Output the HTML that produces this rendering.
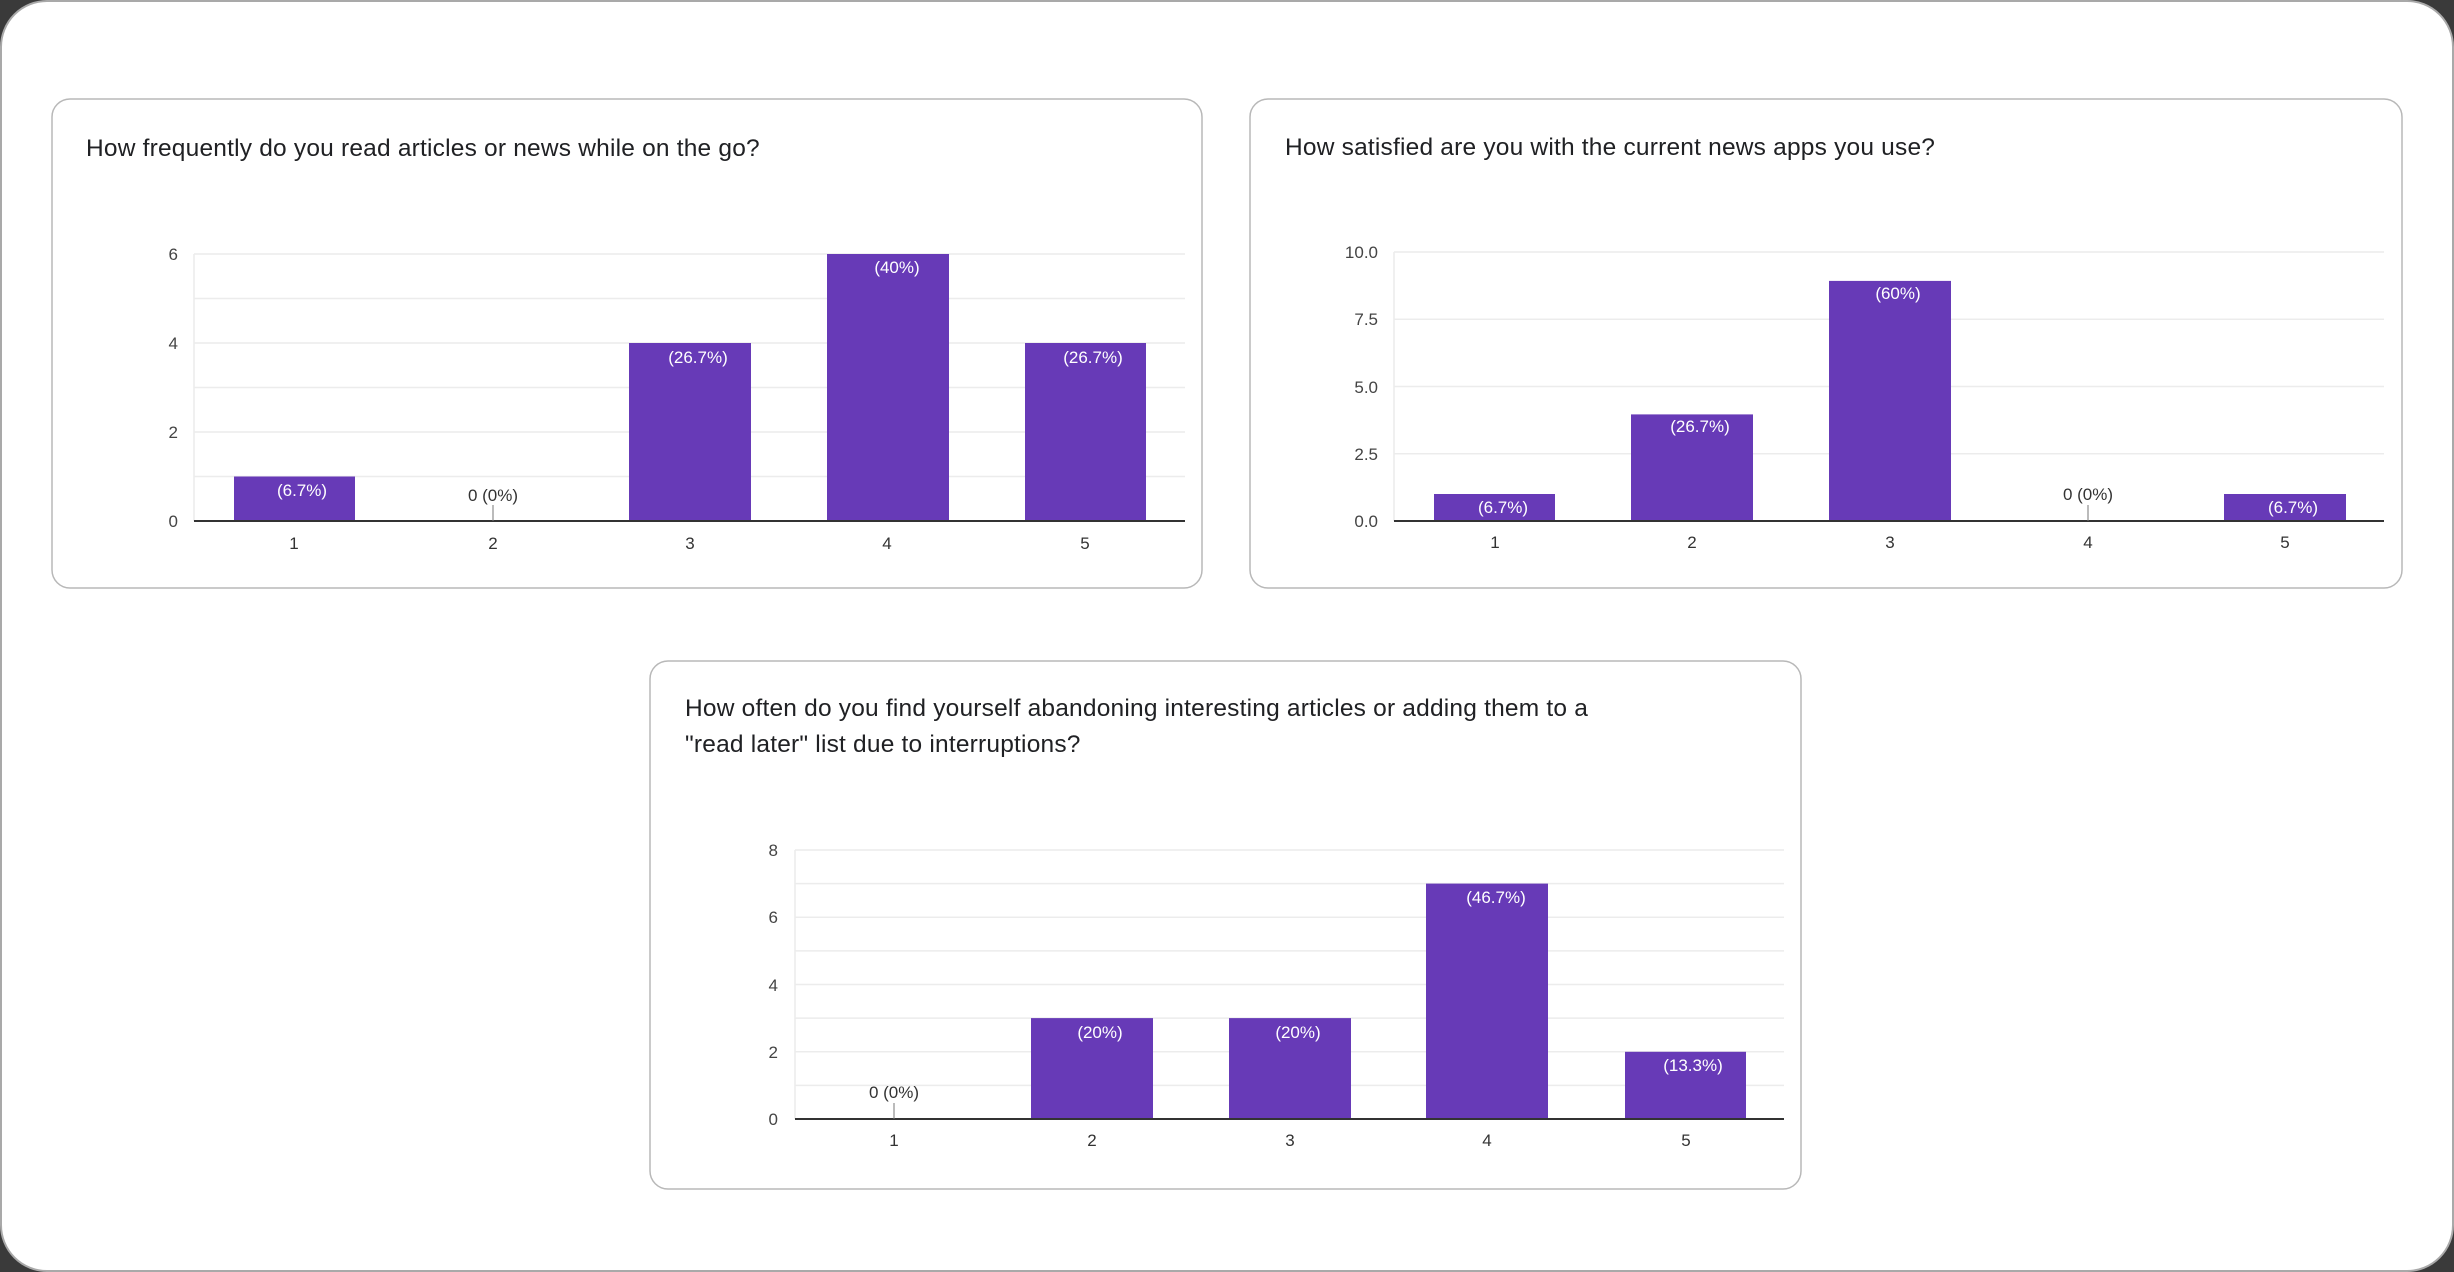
<!DOCTYPE html>
<html><head><meta charset="utf-8"><style>
html,body{margin:0;padding:0;background:#fff;}
svg{display:block;font-family:"Liberation Sans",Arial,sans-serif;}
.t{font-size:24.5px;letter-spacing:0.2px;}
</style></head><body>
<svg width="2454" height="1272" viewBox="0 0 2454 1272" xmlns="http://www.w3.org/2000/svg">
<rect x="0" y="0" width="2454" height="1272" fill="#3a3a3a"/>
<rect x="1" y="1" width="2452" height="1270" rx="46" fill="#fff" stroke="#a9a9a9" stroke-width="2"/>

<!-- Card 1 -->
<rect x="52" y="99" width="1150" height="489" rx="18" fill="#fff" stroke="#b8b8b8" stroke-width="1.5"/>
<text class="t" x="86" y="156" fill="#202124">How frequently do you read articles or news while on the go?</text>
<g stroke="#ececec" stroke-width="1.5">
<line x1="194" y1="254" x2="1185" y2="254"/><line x1="194" y1="298.5" x2="1185" y2="298.5"/>
<line x1="194" y1="343" x2="1185" y2="343"/><line x1="194" y1="387.5" x2="1185" y2="387.5"/>
<line x1="194" y1="432" x2="1185" y2="432"/><line x1="194" y1="476.5" x2="1185" y2="476.5"/>
<line x1="194" y1="254" x2="194" y2="521"/>
</g>
<g font-size="17" fill="#444" text-anchor="end">
<text x="178" y="260">6</text><text x="178" y="349">4</text><text x="178" y="438">2</text><text x="178" y="527">0</text>
</g>
<g fill="#673ab7">
<rect x="234" y="476.5" width="121" height="44.5"/><rect x="629" y="343" width="122" height="178"/>
<rect x="827" y="254" width="122" height="267"/><rect x="1025" y="343" width="121" height="178"/>
</g>
<line x1="194" y1="521" x2="1185" y2="521" stroke="#333" stroke-width="2"/>
<line x1="493" y1="505" x2="493" y2="521" stroke="#777" stroke-width="1"/>
<g font-size="17" fill="#fff" text-anchor="middle">
<text x="302" y="496">(6.7%)</text><text x="698" y="363">(26.7%)</text><text x="897" y="273">(40%)</text><text x="1093" y="363">(26.7%)</text>
</g>
<text x="493" y="501" font-size="17" fill="#333" text-anchor="middle">0 (0%)</text>
<g font-size="17" fill="#333" text-anchor="middle">
<text x="294" y="549">1</text><text x="493" y="549">2</text><text x="690" y="549">3</text><text x="887" y="549">4</text><text x="1085" y="549">5</text>
</g>

<!-- Card 2 -->
<rect x="1250" y="99" width="1152" height="489" rx="18" fill="#fff" stroke="#b8b8b8" stroke-width="1.5"/>
<text class="t" x="1285" y="155" fill="#202124">How satisfied are you with the current news apps you use?</text>
<g stroke="#ececec" stroke-width="1.5">
<line x1="1394" y1="252" x2="2384" y2="252"/>
<line x1="1394" y1="319.2" x2="2384" y2="319.2"/>
<line x1="1394" y1="386.5" x2="2384" y2="386.5"/>
<line x1="1394" y1="453.8" x2="2384" y2="453.8"/>
<line x1="1394" y1="252" x2="1394" y2="521"/>
</g>
<g font-size="17" fill="#444" text-anchor="end">
<text x="1378" y="258">10.0</text><text x="1378" y="325">7.5</text><text x="1378" y="393">5.0</text><text x="1378" y="460">2.5</text><text x="1378" y="527">0.0</text>
</g>
<g fill="#673ab7">
<rect x="1434" y="494" width="121" height="27"/><rect x="1631" y="414.4" width="122" height="106.6"/>
<rect x="1829" y="280.9" width="122" height="240.1"/><rect x="2224" y="494" width="122" height="27"/>
</g>
<line x1="1394" y1="521" x2="2384" y2="521" stroke="#333" stroke-width="2"/>
<line x1="2088" y1="505" x2="2088" y2="521" stroke="#777" stroke-width="1"/>
<g font-size="17" fill="#fff" text-anchor="middle">
<text x="1503" y="513">(6.7%)</text><text x="1700" y="432">(26.7%)</text><text x="1898" y="299">(60%)</text><text x="2293" y="513">(6.7%)</text>
</g>
<text x="2088" y="500" font-size="17" fill="#333" text-anchor="middle">0 (0%)</text>
<g font-size="17" fill="#333" text-anchor="middle">
<text x="1495" y="548">1</text><text x="1692" y="548">2</text><text x="1890" y="548">3</text><text x="2088" y="548">4</text><text x="2285" y="548">5</text>
</g>

<!-- Card 3 -->
<rect x="650" y="661" width="1151" height="528" rx="18" fill="#fff" stroke="#b8b8b8" stroke-width="1.5"/>
<text class="t" x="685" y="716" fill="#202124">How often do you find yourself abandoning interesting articles or adding them to a</text>
<text class="t" x="685" y="752" fill="#202124">"read later" list due to interruptions?</text>
<g stroke="#ececec" stroke-width="1.5">
<line x1="795" y1="850" x2="1784" y2="850"/><line x1="795" y1="883.6" x2="1784" y2="883.6"/>
<line x1="795" y1="917.3" x2="1784" y2="917.3"/><line x1="795" y1="950.9" x2="1784" y2="950.9"/>
<line x1="795" y1="984.5" x2="1784" y2="984.5"/><line x1="795" y1="1018.1" x2="1784" y2="1018.1"/>
<line x1="795" y1="1051.8" x2="1784" y2="1051.8"/><line x1="795" y1="1085.4" x2="1784" y2="1085.4"/>
<line x1="795" y1="850" x2="795" y2="1119"/>
</g>
<g font-size="17" fill="#444" text-anchor="end">
<text x="778" y="856">8</text><text x="778" y="923">6</text><text x="778" y="991">4</text><text x="778" y="1058">2</text><text x="778" y="1125">0</text>
</g>
<g fill="#673ab7">
<rect x="1031" y="1018.1" width="122" height="100.9"/><rect x="1229" y="1018.1" width="122" height="100.9"/>
<rect x="1426" y="883.6" width="122" height="235.4"/><rect x="1625" y="1051.8" width="121" height="67.2"/>
</g>
<line x1="795" y1="1119" x2="1784" y2="1119" stroke="#333" stroke-width="2"/>
<line x1="894" y1="1103" x2="894" y2="1119" stroke="#777" stroke-width="1"/>
<g font-size="17" fill="#fff" text-anchor="middle">
<text x="1100" y="1038">(20%)</text><text x="1298" y="1038">(20%)</text><text x="1496" y="903">(46.7%)</text><text x="1693" y="1071">(13.3%)</text>
</g>
<text x="894" y="1098" font-size="17" fill="#333" text-anchor="middle">0 (0%)</text>
<g font-size="17" fill="#333" text-anchor="middle">
<text x="894" y="1146">1</text><text x="1092" y="1146">2</text><text x="1290" y="1146">3</text><text x="1487" y="1146">4</text><text x="1686" y="1146">5</text>
</g>
</svg>
</body></html>
